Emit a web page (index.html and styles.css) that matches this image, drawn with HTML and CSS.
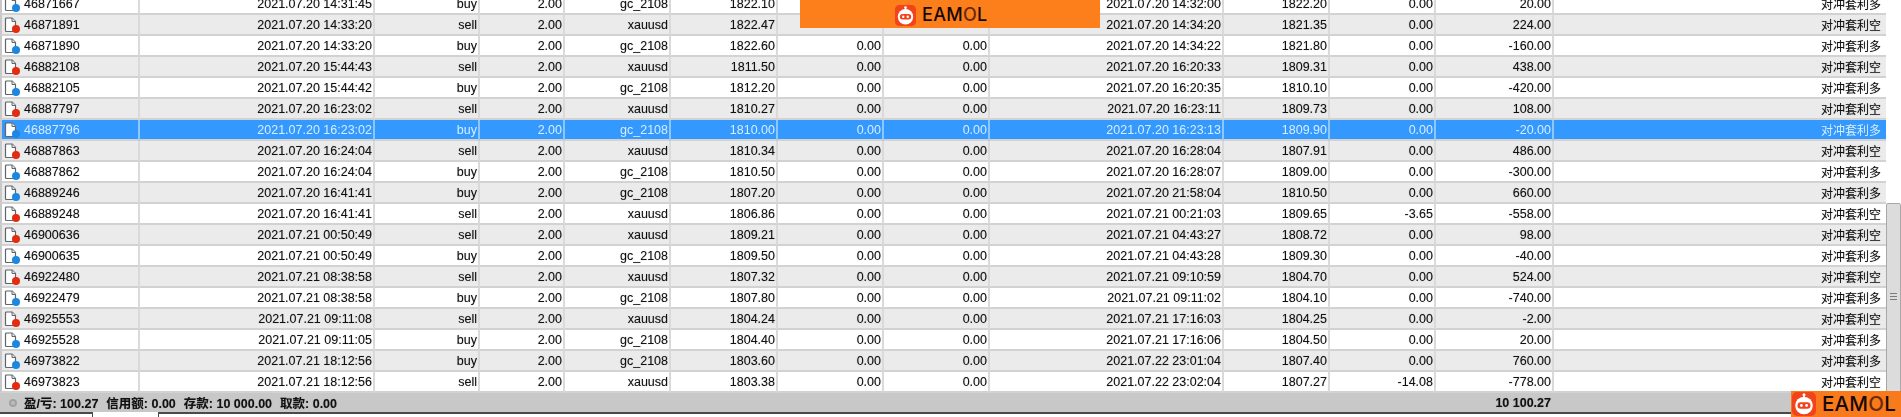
FILE: index.html
```html
<!DOCTYPE html>
<html lang="zh">
<head>
<meta charset="utf-8">
<title>Account History</title>
<link rel="stylesheet" href="styles.css">
</head>
<body>
<svg class="defs" aria-hidden="true">
  <symbol id="doc" viewBox="0 0 15 16">
    <path d="M1.5 2a1 1 0 0 1 1-1h5.5l3.5 3.5v9a1 1 0 0 1-1 1h-8a1 1 0 0 1-1-1z" fill="#fff" stroke="#5f656b" stroke-width="1.2" stroke-linejoin="round"/>
    <path d="M8 1v3.5h3.5" fill="#e8e8e8" stroke="#5f656b" stroke-width="1"/>
  </symbol>
  <symbol id="bot" viewBox="0 0 24 24">
    <rect width="24" height="24" rx="5" fill="#f2431a"/>
    <rect x="11.2" y="2.6" width="1.6" height="3" fill="#fff"/>
    <circle cx="12" cy="2.8" r="1.5" fill="#fff"/>
    <circle cx="12" cy="13.5" r="8.8" fill="#fff"/>
    <rect x="5.5" y="10.3" width="13" height="6.4" rx="3.2" fill="#f2431a"/>
    <circle cx="9.4" cy="13.5" r="1.4" fill="#fff"/>
    <circle cx="14.6" cy="13.5" r="1.4" fill="#fff"/>
  </symbol>
</svg>
<div class="window">
  <div class="content">
    <table class="grid">
      <colgroup>
        <col class="c1"><col class="c2"><col class="c3"><col class="c4"><col class="c5"><col class="c6"><col class="c7"><col class="c8"><col class="c9"><col class="c10"><col class="c11"><col class="c12"><col class="c13">
      </colgroup>
      <tbody>
        <tr><td class="first"><span class="ticket"><span class="ico"><svg class="doc"><use href="#doc"/></svg><i class="dot buy"></i></span>46871667</span></td><td>2021.07.20 14:31:45</td><td>buy</td><td>2.00</td><td>gc_2108</td><td>1822.10</td><td></td><td></td><td>2021.07.20 14:32:00</td><td>1822.20</td><td>0.00</td><td>20.00</td><td class="cm">对冲套利多</td></tr>
        <tr class="alt"><td class="first"><span class="ticket"><span class="ico"><svg class="doc"><use href="#doc"/></svg><i class="dot sell"></i></span>46871891</span></td><td>2021.07.20 14:33:20</td><td>sell</td><td>2.00</td><td>xauusd</td><td>1822.47</td><td></td><td></td><td>2021.07.20 14:34:20</td><td>1821.35</td><td>0.00</td><td>224.00</td><td class="cm">对冲套利空</td></tr>
        <tr><td class="first"><span class="ticket"><span class="ico"><svg class="doc"><use href="#doc"/></svg><i class="dot buy"></i></span>46871890</span></td><td>2021.07.20 14:33:20</td><td>buy</td><td>2.00</td><td>gc_2108</td><td>1822.60</td><td>0.00</td><td>0.00</td><td>2021.07.20 14:34:22</td><td>1821.80</td><td>0.00</td><td>-160.00</td><td class="cm">对冲套利多</td></tr>
        <tr class="alt"><td class="first"><span class="ticket"><span class="ico"><svg class="doc"><use href="#doc"/></svg><i class="dot sell"></i></span>46882108</span></td><td>2021.07.20 15:44:43</td><td>sell</td><td>2.00</td><td>xauusd</td><td>1811.50</td><td>0.00</td><td>0.00</td><td>2021.07.20 16:20:33</td><td>1809.31</td><td>0.00</td><td>438.00</td><td class="cm">对冲套利空</td></tr>
        <tr><td class="first"><span class="ticket"><span class="ico"><svg class="doc"><use href="#doc"/></svg><i class="dot buy"></i></span>46882105</span></td><td>2021.07.20 15:44:42</td><td>buy</td><td>2.00</td><td>gc_2108</td><td>1812.20</td><td>0.00</td><td>0.00</td><td>2021.07.20 16:20:35</td><td>1810.10</td><td>0.00</td><td>-420.00</td><td class="cm">对冲套利多</td></tr>
        <tr class="alt"><td class="first"><span class="ticket"><span class="ico"><svg class="doc"><use href="#doc"/></svg><i class="dot sell"></i></span>46887797</span></td><td>2021.07.20 16:23:02</td><td>sell</td><td>2.00</td><td>xauusd</td><td>1810.27</td><td>0.00</td><td>0.00</td><td>2021.07.20 16:23:11</td><td>1809.73</td><td>0.00</td><td>108.00</td><td class="cm">对冲套利空</td></tr>
        <tr class="sel"><td class="first"><span class="ticket"><span class="ico"><svg class="doc"><use href="#doc"/></svg><i class="dot buy"></i></span>46887796</span></td><td>2021.07.20 16:23:02</td><td>buy</td><td>2.00</td><td>gc_2108</td><td>1810.00</td><td>0.00</td><td>0.00</td><td>2021.07.20 16:23:13</td><td>1809.90</td><td>0.00</td><td>-20.00</td><td class="cm">对冲套利多</td></tr>
        <tr class="alt"><td class="first"><span class="ticket"><span class="ico"><svg class="doc"><use href="#doc"/></svg><i class="dot sell"></i></span>46887863</span></td><td>2021.07.20 16:24:04</td><td>sell</td><td>2.00</td><td>xauusd</td><td>1810.34</td><td>0.00</td><td>0.00</td><td>2021.07.20 16:28:04</td><td>1807.91</td><td>0.00</td><td>486.00</td><td class="cm">对冲套利空</td></tr>
        <tr><td class="first"><span class="ticket"><span class="ico"><svg class="doc"><use href="#doc"/></svg><i class="dot buy"></i></span>46887862</span></td><td>2021.07.20 16:24:04</td><td>buy</td><td>2.00</td><td>gc_2108</td><td>1810.50</td><td>0.00</td><td>0.00</td><td>2021.07.20 16:28:07</td><td>1809.00</td><td>0.00</td><td>-300.00</td><td class="cm">对冲套利多</td></tr>
        <tr class="alt"><td class="first"><span class="ticket"><span class="ico"><svg class="doc"><use href="#doc"/></svg><i class="dot buy"></i></span>46889246</span></td><td>2021.07.20 16:41:41</td><td>buy</td><td>2.00</td><td>gc_2108</td><td>1807.20</td><td>0.00</td><td>0.00</td><td>2021.07.20 21:58:04</td><td>1810.50</td><td>0.00</td><td>660.00</td><td class="cm">对冲套利多</td></tr>
        <tr><td class="first"><span class="ticket"><span class="ico"><svg class="doc"><use href="#doc"/></svg><i class="dot sell"></i></span>46889248</span></td><td>2021.07.20 16:41:41</td><td>sell</td><td>2.00</td><td>xauusd</td><td>1806.86</td><td>0.00</td><td>0.00</td><td>2021.07.21 00:21:03</td><td>1809.65</td><td>-3.65</td><td>-558.00</td><td class="cm">对冲套利空</td></tr>
        <tr class="alt"><td class="first"><span class="ticket"><span class="ico"><svg class="doc"><use href="#doc"/></svg><i class="dot sell"></i></span>46900636</span></td><td>2021.07.21 00:50:49</td><td>sell</td><td>2.00</td><td>xauusd</td><td>1809.21</td><td>0.00</td><td>0.00</td><td>2021.07.21 04:43:27</td><td>1808.72</td><td>0.00</td><td>98.00</td><td class="cm">对冲套利空</td></tr>
        <tr><td class="first"><span class="ticket"><span class="ico"><svg class="doc"><use href="#doc"/></svg><i class="dot buy"></i></span>46900635</span></td><td>2021.07.21 00:50:49</td><td>buy</td><td>2.00</td><td>gc_2108</td><td>1809.50</td><td>0.00</td><td>0.00</td><td>2021.07.21 04:43:28</td><td>1809.30</td><td>0.00</td><td>-40.00</td><td class="cm">对冲套利多</td></tr>
        <tr class="alt"><td class="first"><span class="ticket"><span class="ico"><svg class="doc"><use href="#doc"/></svg><i class="dot sell"></i></span>46922480</span></td><td>2021.07.21 08:38:58</td><td>sell</td><td>2.00</td><td>xauusd</td><td>1807.32</td><td>0.00</td><td>0.00</td><td>2021.07.21 09:10:59</td><td>1804.70</td><td>0.00</td><td>524.00</td><td class="cm">对冲套利空</td></tr>
        <tr><td class="first"><span class="ticket"><span class="ico"><svg class="doc"><use href="#doc"/></svg><i class="dot buy"></i></span>46922479</span></td><td>2021.07.21 08:38:58</td><td>buy</td><td>2.00</td><td>gc_2108</td><td>1807.80</td><td>0.00</td><td>0.00</td><td>2021.07.21 09:11:02</td><td>1804.10</td><td>0.00</td><td>-740.00</td><td class="cm">对冲套利多</td></tr>
        <tr class="alt"><td class="first"><span class="ticket"><span class="ico"><svg class="doc"><use href="#doc"/></svg><i class="dot sell"></i></span>46925553</span></td><td>2021.07.21 09:11:08</td><td>sell</td><td>2.00</td><td>xauusd</td><td>1804.24</td><td>0.00</td><td>0.00</td><td>2021.07.21 17:16:03</td><td>1804.25</td><td>0.00</td><td>-2.00</td><td class="cm">对冲套利空</td></tr>
        <tr><td class="first"><span class="ticket"><span class="ico"><svg class="doc"><use href="#doc"/></svg><i class="dot buy"></i></span>46925528</span></td><td>2021.07.21 09:11:05</td><td>buy</td><td>2.00</td><td>gc_2108</td><td>1804.40</td><td>0.00</td><td>0.00</td><td>2021.07.21 17:16:06</td><td>1804.50</td><td>0.00</td><td>20.00</td><td class="cm">对冲套利多</td></tr>
        <tr class="alt"><td class="first"><span class="ticket"><span class="ico"><svg class="doc"><use href="#doc"/></svg><i class="dot buy"></i></span>46973822</span></td><td>2021.07.21 18:12:56</td><td>buy</td><td>2.00</td><td>gc_2108</td><td>1803.60</td><td>0.00</td><td>0.00</td><td>2021.07.22 23:01:04</td><td>1807.40</td><td>0.00</td><td>760.00</td><td class="cm">对冲套利多</td></tr>
        <tr class="last"><td class="first"><span class="ticket"><span class="ico"><svg class="doc"><use href="#doc"/></svg><i class="dot sell"></i></span>46973823</span></td><td>2021.07.21 18:12:56</td><td>sell</td><td>2.00</td><td>xauusd</td><td>1803.38</td><td>0.00</td><td>0.00</td><td>2021.07.22 23:02:04</td><td>1807.27</td><td>-14.08</td><td>-778.00</td><td class="cm">对冲套利空</td></tr>
      </tbody>
      <tfoot>
        <tr class="summary">
          <td colspan="11"><span class="totals"><i class="led"></i><span>盈/亏: 100.27</span><span>信用额: 0.00</span><span>存款: 10 000.00</span><span>取款: 0.00</span></span></td>
          <td>10 100.27</td>
          <td></td>
        </tr>
      </tfoot>
    </table>
    <div class="scrollbar"><div class="thumb"><span class="grip"></span></div></div>
  </div>
  <div class="tabs"><div class="rule short"></div><div class="tab"></div><div class="rule"></div></div>
</div>
<div class="banner"><svg class="bot"><use href="#bot"/></svg><span class="brand">EAM<b class="o">O</b>L</span></div>
<div class="corner"><svg class="bot"><use href="#bot"/></svg><span class="brand">EAM<b class="o">O</b>L</span></div>
</body>
</html>
```
FILE: styles.css
```css
* { box-sizing: border-box; }
html, body { margin: 0; padding: 0; height: 417px; overflow: hidden; background: #fff; }
body { position: relative; font-family: "Liberation Sans", "Noto Sans CJK SC", sans-serif; color: #111; }
.defs { width: 0; height: 0; display: block; }
.window { height: 417px; display: flex; flex-direction: column; overflow: hidden; }
.content { height: 412px; flex: none; display: flex; align-items: stretch; overflow: hidden; }

.grid {
  width: 1886px; flex: none; table-layout: fixed; border-collapse: separate; border-spacing: 0;
  margin-top: -6px; align-self: flex-start; font-size: 12.5px; filter: blur(0.4px);
  text-shadow: 0 0 1px rgba(0, 0, 0, 0.35);
}
.c1 { width: 140px; } .c2 { width: 235px; } .c3 { width: 105px; } .c4 { width: 85px; }
.c5 { width: 106px; } .c6 { width: 107px; } .c7 { width: 106px; } .c8 { width: 106px; }
.c9 { width: 234px; } .c10 { width: 106px; } .c11 { width: 106px; } .c12 { width: 118px; } .c13 { width: 332px; }

.grid tbody td {
  height: 21px; padding: 0 1px 0 0; text-align: right; white-space: nowrap; overflow: hidden;
  border-right: 2px solid #dadada; border-bottom: 2px solid #d2d2d2; background: #fff;
}
.grid tbody tr.alt td { background: #ebebeb; }
.grid tbody tr.sel td { background: #3399ff; color: #d9ecff; text-shadow: none; border-right-color: #8fc6fb; }
.grid tbody td.first { text-align: left; padding-left: 2px; border-left: 2px solid #c8c8c8; }
.grid tbody td.cm { font-size: 12px; padding-right: 5px; border-right: 0; }

.ticket { display: flex; align-items: center; gap: 5px; }
.ico { position: relative; width: 15px; height: 16px; flex: none; }
.doc { width: 15px; height: 16px; display: block; }
.dot { position: absolute; right: -1px; bottom: 0; width: 8px; height: 8px; border-radius: 50%; }
.dot.buy { background: #1b87e0; }
.dot.sell { background: #e42a10; }

.summary td {
  height: 19px; background: #c8c8c8; font-weight: bold; padding: 0 3px 2px 0; text-align: right; white-space: nowrap;
}
.totals { display: flex; align-items: center; gap: 8px; padding-left: 24px; position: relative; text-align: left; }
.led { position: absolute; left: 9px; top: 50%; margin-top: -4px; width: 8px; height: 8px; border-radius: 50%; background: #bdbdbd; border: 2px solid #a2a2a2; }

.scrollbar { width: 15px; flex: none; padding-top: 203px; }
.thumb {
  height: 100%; background: #dcdcdc; border: 1px solid #a8a8a8; border-radius: 2px;
  display: flex; justify-content: center; padding-top: 89px;
}
.grip { width: 7px; height: 9px; background: repeating-linear-gradient(#7a7a7a 0 1px, transparent 1px 3px); }

.tabs { display: flex; height: 5px; flex: none; }
.rule { flex: 1; border-top: 2px solid #4a4a4a; }
.rule.short { flex: 0 0 92px; }
.tab { flex: 0 0 67px; border-left: 1px solid #4a4a4a; border-right: 1px solid #4a4a4a; background: #fff; }

.banner {
  position: absolute; left: 800px; top: 0; width: 300px; height: 28px; background: #fd7f1c;
  display: flex; align-items: center; gap: 6px; padding: 2px 0 0 95px;
}
.banner .bot { width: 21px; height: 21px; flex: none; }
.banner .brand { font-size: 18px; letter-spacing: 0.3px; }
.corner {
  position: absolute; right: 0; bottom: 0; width: 110px; height: 26px; background: #f97a1c;
  display: flex; align-items: center; gap: 6px; padding-left: 1px;
}
.corner .bot { width: 24px; height: 24px; flex: none; }
.corner .brand { font-size: 20.5px; letter-spacing: 0.2px; }
.brand { font-family: Inter, "Liberation Sans", sans-serif; font-weight: 500; color: #150a04; line-height: 1; }
.brand .o { font-weight: 500; color: #6b2a08; }
```
